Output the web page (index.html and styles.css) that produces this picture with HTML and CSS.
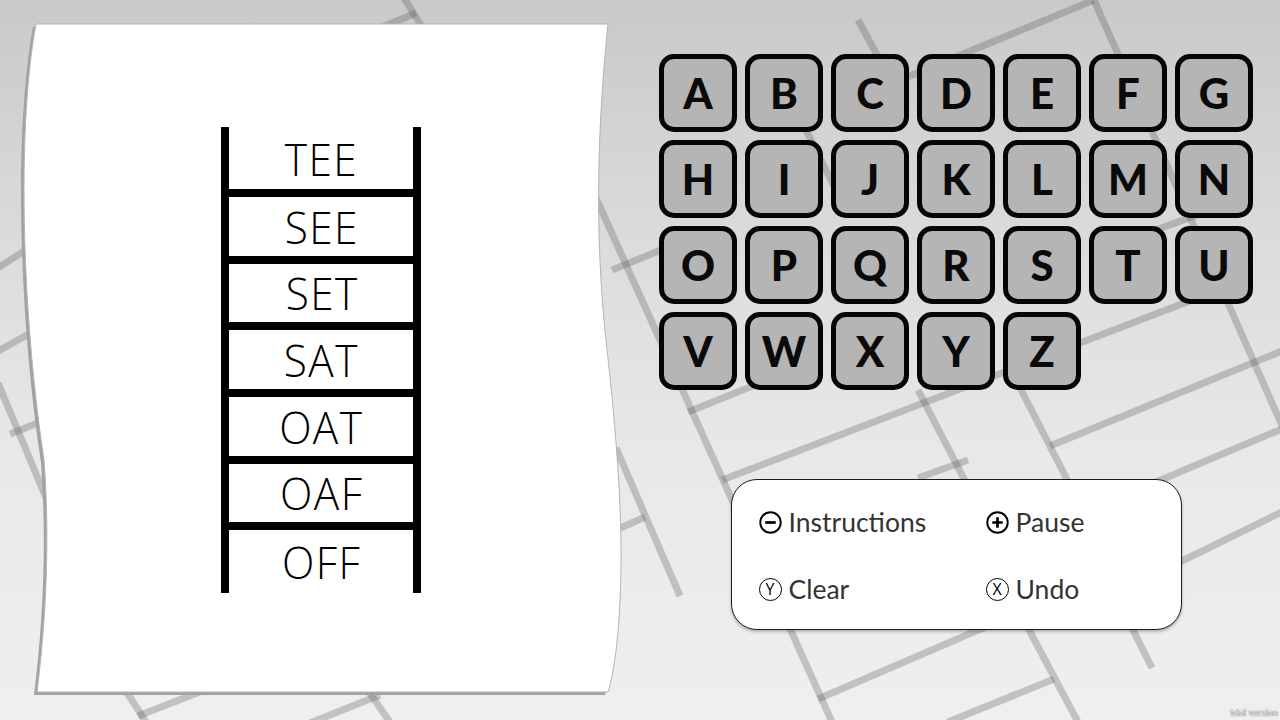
FILE: index.html
```html
<!DOCTYPE html>
<html lang="en">
<head>
<meta charset="utf-8">
<title>Word Ladder</title>
<link rel="stylesheet" href="styles.css">
</head>
<body>
<svg class="bg" viewBox="0 0 1280 720" aria-hidden="true">
  <g class="mortar">
    <path d="M380,28 L416,13"/>
    <path d="M404,-2 L424,30"/>
    <path d="M858,20 L882,64"/>
    <path d="M900,80 L1094,0"/>
    <path d="M1094,0 L1284,430"/>
    <path d="M-2,268 L32,246"/>
    <path d="M-2,351 L36,330"/>
    <path d="M-2,383 L52,512"/>
    <path d="M10,434 L48,419"/>
    <path d="M120,682 L148,725"/>
    <path d="M138,716 L215,686"/>
    <path d="M362,682 L392,725"/>
    <path d="M305,725 L380,695"/>
    <path d="M596,198 L832,722"/>
    <path d="M612,270 L700,234"/>
    <path d="M688,412 L760,383"/>
    <path d="M616,448 L680,596"/>
    <path d="M616,530 L645,517"/>
    <path d="M722,480 L1200,297"/>
    <path d="M918,390 L975,500"/>
    <path d="M918,478 L968,460"/>
    <path d="M1015,378 L1075,495"/>
    <path d="M1050,446 L1284,350"/>
    <path d="M1156,482 L1284,428"/>
    <path d="M1180,562 L1284,511"/>
    <path d="M818,699 L990,625"/>
    <path d="M1027,626 L1078,722"/>
    <path d="M948,722 L1054,679"/>
    <path d="M1131,626 L1152,668"/>
    <path d="M800,118 L835,188"/>
    <path d="M1150,232 L1200,214"/>
  </g>
</svg>

<main class="stage">
  <section class="paper">
    <svg class="paper-shape" viewBox="16 20 610 680" aria-hidden="true">
      <path class="paper-shadow" d="M36,24 L608,24 C598,120 594,230 606,340 C616,430 624,520 620,600 C618,650 612,680 608,692 L37,692 C46,620 50,540 44,460 C20,300 18,120 36,24 Z" transform="translate(-3,3)"/>
      <path class="paper-sheet" d="M36,24 L608,24 C598,120 594,230 606,340 C616,430 624,520 620,600 C618,650 612,680 608,692 L37,692 C46,620 50,540 44,460 C20,300 18,120 36,24 Z"/>
    </svg>
    <div class="ladder">
      <div class="step first"><span class="word">TEE</span></div>
      <div class="step"><span class="word">SEE</span></div>
      <div class="step"><span class="word">SET</span></div>
      <div class="step"><span class="word">SAT</span></div>
      <div class="step"><span class="word">OAT</span></div>
      <div class="step"><span class="word">OAF</span></div>
      <div class="step last"><span class="word">OFF</span></div>
    </div>
  </section>

  <section class="side">
    <div class="keys">
      <div class="key">A</div><div class="key">B</div><div class="key">C</div><div class="key">D</div><div class="key">E</div><div class="key">F</div><div class="key">G</div>
      <div class="key">H</div><div class="key">I</div><div class="key">J</div><div class="key">K</div><div class="key">L</div><div class="key">M</div><div class="key">N</div>
      <div class="key">O</div><div class="key">P</div><div class="key">Q</div><div class="key">R</div><div class="key">S</div><div class="key">T</div><div class="key">U</div>
      <div class="key">V</div><div class="key">W</div><div class="key">X</div><div class="key">Y</div><div class="key">Z</div>
    </div>

    <div class="panel">
      <div class="control">
        <svg class="icon" viewBox="0 0 22 22" aria-hidden="true"><circle cx="11" cy="11" r="9.8"/><path class="bar" d="M6,11 H16"/></svg>
        <span>Instructions</span>
      </div>
      <div class="control">
        <svg class="icon" viewBox="0 0 22 22" aria-hidden="true"><circle cx="11" cy="11" r="9.8"/><path class="bar" d="M6,11 H16 M11,6 V16"/></svg>
        <span>Pause</span>
      </div>
      <div class="control">
        <span class="btn-glyph">Y</span>
        <span>Clear</span>
      </div>
      <div class="control">
        <span class="btn-glyph">X</span>
        <span>Undo</span>
      </div>
    </div>
  </section>
</main>

<div class="watermark">trial version</div>
</body>
</html>
```

FILE: styles.css
```css
html, body {
  margin: 0;
  padding: 0;
}

body {
  position: relative;
  width: 1280px;
  height: 720px;
  overflow: hidden;
  font-family: Lato, "Open Sans", sans-serif;
  background: linear-gradient(180deg, #c9c9c9 0%, #dcdcdc 35%, #e9e9ea 65%, #efeff0 100%);
}

.bg {
  position: absolute;
  left: 0;
  top: 0;
  width: 1280px;
  height: 720px;
  z-index: 0;
}

.mortar path {
  fill: none;
  stroke: rgba(90, 90, 90, 0.3);
  stroke-width: 7;
}

.stage {
  position: relative;
  z-index: 1;
  display: flex;
  align-items: flex-start;
  height: 720px;
}

/* ---------- paper with ladder ---------- */
.paper {
  position: relative;
  box-sizing: border-box;
  width: 610px;
  height: 680px;
  margin: 20px 0 0 16px;
  padding-top: 107px;
  display: flex;
  justify-content: center;
  align-items: flex-start;
}

.paper-shape {
  position: absolute;
  left: 0;
  top: 0;
  width: 610px;
  height: 680px;
}

.paper-shadow {
  fill: #a2a2a2;
}

.paper-sheet {
  fill: #ffffff;
  stroke: #b4b4b4;
  stroke-width: 1;
}

.ladder {
  position: relative;
  box-sizing: border-box;
  width: 200px;
  border-left: 8px solid #000;
  border-right: 8px solid #000;
  display: flex;
  flex-direction: column;
}

.step {
  box-sizing: border-box;
  height: 66.67px;
  border-top: 8px solid #000;
  display: flex;
  align-items: center;
  justify-content: center;
}

.word {
  display: inline-block;
  font-family: "Open Sans", "DejaVu Sans", sans-serif;
  font-weight: 330;
  font-stretch: 100%;
  font-size: 45px;
  line-height: 1;
  letter-spacing: 1.5px;
  padding-left: 1.5px;
  color: #000;
  transform: scaleX(0.94);
}

.step.first {
  height: 62px;
  border-top: none;
}

.step.last {
  height: 70.67px;
}

/* ---------- letter keys ---------- */
.side {
  display: flex;
  flex-direction: column;
  margin: 54px 0 0 33px;
}

.keys {
  display: grid;
  grid-template-columns: repeat(7, 78px);
  grid-auto-rows: 78px;
  gap: 8px;
}

.key {
  box-sizing: border-box;
  background: #b5b5b5;
  border: 5px solid #050505;
  border-radius: 15px;
  display: flex;
  align-items: center;
  justify-content: center;
  font-family: Lato, "Open Sans", sans-serif;
  font-weight: 900;
  font-size: 42px;
  color: #0a0a0a;
}

/* ---------- controls panel ---------- */
.panel {
  box-sizing: border-box;
  width: 451px;
  height: 151px;
  margin: 89px 0 0 72px;
  background: #ffffff;
  border: 1.5px solid #1c1c1c;
  border-radius: 26px;
  box-shadow: 0 2px 3px rgba(0, 0, 0, 0.25);
  padding: 25px 0 0 26.5px;
  display: grid;
  grid-template-columns: 227px auto;
  grid-auto-rows: 34px;
  row-gap: 33px;
}

.control {
  display: flex;
  align-items: center;
  gap: 7px;
  font-size: 26.5px;
  line-height: 34px;
  color: #333333;
}

.icon {
  width: 23px;
  height: 23px;
  flex: none;
}

.icon circle {
  fill: none;
  stroke: #000;
  stroke-width: 1.8;
}

.icon .bar {
  fill: none;
  stroke: #000;
  stroke-width: 2.6;
}

.btn-glyph {
  box-sizing: border-box;
  width: 23px;
  height: 23px;
  flex: none;
  border: 1.8px solid #000;
  border-radius: 50%;
  display: flex;
  align-items: center;
  justify-content: center;
  font-family: "Open Sans", "DejaVu Sans", sans-serif;
  font-size: 16px;
  line-height: 1;
  color: #000;
}

.watermark {
  position: absolute;
  right: 2px;
  bottom: 2px;
  z-index: 2;
  font-family: "DejaVu Sans", sans-serif;
  font-size: 8px;
  color: #ffffff;
  text-shadow: 0 0 1px #555, 0 0 1px #555;
}
```
